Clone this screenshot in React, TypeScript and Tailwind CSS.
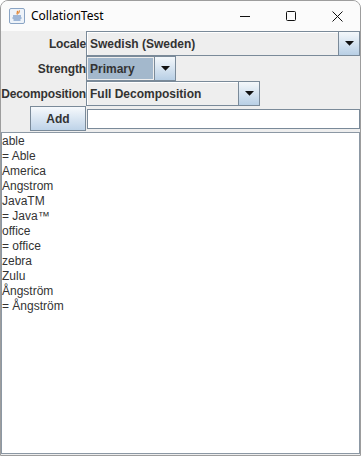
import React from "react";

const words = [
  "able",
  "= Able",
  "America",
  "Angstrom",
  "JavaTM",
  "= Java™",
  "office",
  "= office",
  "zebra",
  "Zulu",
  "Ångström",
  "= Ångström",
];

function Arrow() {
  return (
    <div className="flex h-full w-[21px] shrink-0 items-center justify-center border-l border-[#7a8a99] bg-gradient-to-b from-[#f4f8fb] to-[#b8cfe5]">
      <svg width="9" height="5" viewBox="0 0 9 5">
        <path d="M0 0H9L4.5 4.8Z" fill="#111" />
      </svg>
    </div>
  );
}

function Combo({
  text,
  width,
  selected,
}: {
  text: string;
  width: string;
  selected?: boolean;
}) {
  return (
    <div className={`flex h-[25px] ${width} border border-[#7a8a99] bg-[#eeeeee]`}>
      <div
        className={`flex flex-1 items-center pl-[2px] font-bold text-[#333333] ${
          selected ? "m-px bg-[#a3b8cc]" : "border-l border-t border-white"
        }`}
      >
        {text}
      </div>
      <Arrow />
    </div>
  );
}

function Label({ children }: { children: React.ReactNode }) {
  return (
    <div className="flex w-[85px] shrink-0 items-center justify-end whitespace-nowrap font-bold tracking-[-0.15px] text-[#333333]">
      {children}
    </div>
  );
}

export default function App() {
  return (
    <div
      className="flex h-[456px] w-[361px] flex-col overflow-hidden rounded-t-[8px] border border-[#9d9d9d] bg-[#eeeeee] text-[12px]"
      style={{ fontFamily: '"Liberation Sans", Arial, sans-serif' }}
    >
      {/* title bar */}
      <div className="flex h-[30px] shrink-0 items-center bg-[#fbfbfb]">
        <svg className="ml-[8px]" width="16" height="16" viewBox="0 0 16 16">
          <rect x="0.5" y="0.5" width="15" height="15" rx="1.5" fill="#eef3f9" stroke="#8aa4c4" />
          <path d="M8 3c1.5 1-1 2 0.5 3.5M10 2.5c1 1-1 2 0 3" stroke="#e07a1f" strokeWidth="1.2" fill="none" />
          <path d="M4 8h8M3.5 10h9M4.5 12h7" stroke="#4f7bb5" strokeWidth="1" />
        </svg>
        <span
          className="ml-[6px] flex-1 text-[12px] text-black"
          style={{ fontFamily: '"Noto Sans", "Open Sans", sans-serif' }}
        >
          CollationTest
        </span>
        <div className="flex h-full w-[46px] items-center justify-center">
          <svg width="10" height="10" viewBox="0 0 10 10">
            <path d="M0 5.5H10" stroke="#111" strokeWidth="1" />
          </svg>
        </div>
        <div className="flex h-full w-[46px] items-center justify-center">
          <svg width="10" height="10" viewBox="0 0 10 10">
            <rect x="0.5" y="0.5" width="9" height="9" rx="1" fill="none" stroke="#111" />
          </svg>
        </div>
        <div className="flex h-full w-[46px] items-center justify-center">
          <svg width="11" height="11" viewBox="0 0 11 11">
            <path d="M0.5 0.5L10.5 10.5M10.5 0.5L0.5 10.5" stroke="#111" strokeWidth="1" />
          </svg>
        </div>
      </div>

      {/* form rows */}
      <div className="flex h-[25px] shrink-0">
        <Label>Locale</Label>
        <Combo text="Swedish (Sweden)" width="w-[274px]" />
      </div>
      <div className="flex h-[25px] shrink-0">
        <Label>Strength</Label>
        <Combo text="Primary" width="w-[90px]" selected />
      </div>
      <div className="flex h-[25px] shrink-0">
        <Label>Decomposition</Label>
        <Combo text="Full Decomposition" width="w-[174px]" />
      </div>
      <div className="flex h-[25px] shrink-0">
        <div className="flex w-[85px] shrink-0 justify-end">
          <button className="flex h-[25px] w-[56px] items-center justify-center border border-[#7a8a99] bg-gradient-to-b from-[#f6f9fc] to-[#bed3e8] font-bold text-[#333333]">
            Add
          </button>
        </div>
        <div className="flex items-center pl-px">
          <div className="h-[20px] w-[273px] border border-[#7a8a99] bg-white" />
        </div>
      </div>

      {/* list */}
      <div className="mb-px mt-px flex-1 border border-[#8c98a4] bg-white pt-px leading-[15px] text-[#333333]">
        {words.map((w, i) => (
          <div key={i}>{w}</div>
        ))}
      </div>
    </div>
  );
}
